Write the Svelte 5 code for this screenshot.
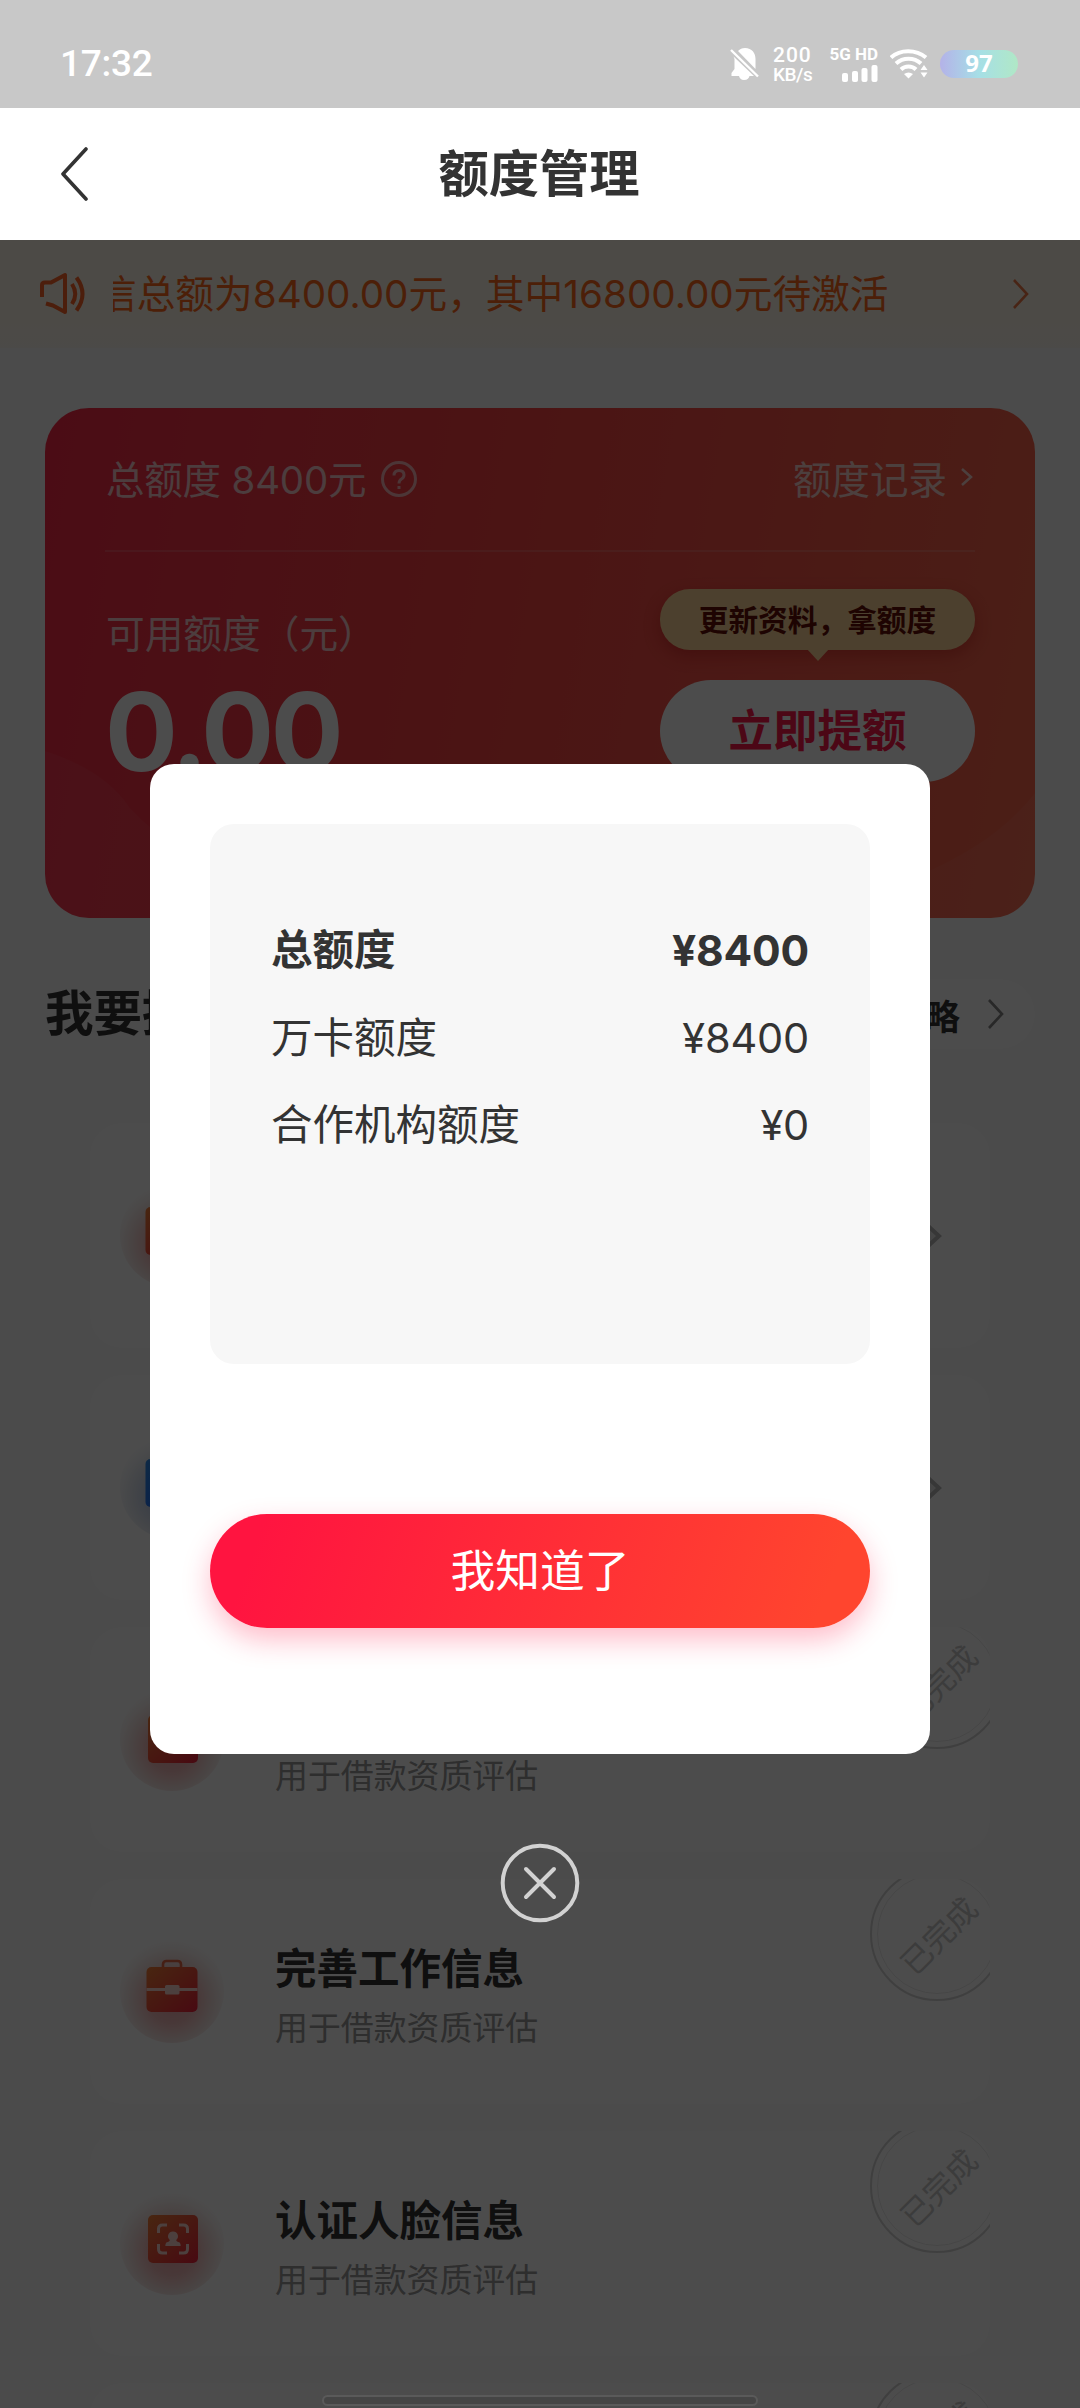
<script>
  const rows = [
    { label: '总额度', value: '¥8400', strong: true },
    { label: '万卡额度', value: '¥8400' },
    { label: '合作机构额度', value: '¥0' }
  ];

  const tasks = [
    { icon: 'card', title: '', note: '', done: false },
    { icon: 'blue', title: '', note: '', done: false },
    { icon: 'user', title: '完善个人信息', note: '用于借款资质评估', done: true },
    { icon: 'work', title: '完善工作信息', note: '用于借款资质评估', done: true },
    { icon: 'face', title: '认证人脸信息', note: '用于借款资质评估', done: true },
    { icon: 'none', title: '', note: '', done: true }
  ];
</script>

<div class="screen">
  <div class="status">
    <span class="clock">17:32</span>
    <div class="indicators">
      <svg class="bell" width="30" height="34" viewBox="0 0 30 34">
        <path d="M8 4 C10 2 12 1 15 1 C22 1 25.500 6 25.500 12 V22 Z M3.500 9.500 L24 29 H19.500 C19 31 17.500 33 14 33 C11 33 9.500 31 9 29 H1.500 V26 L4.500 22 V12 Z" fill="#fff" />
        <path d="M1 3 L28 29.500" stroke="#fff" stroke-width="2.400" />
      </svg>
      <div class="speed"><span>200</span><span>KB/s</span></div>
      <div class="cell">
        <span>5G HD</span>
        <svg width="36" height="17" viewBox="0 0 36 17" fill="#fff">
          <rect x="0" y="8" width="6" height="9" rx="2" />
          <rect x="10" y="6" width="6" height="11" rx="2" />
          <rect x="19.500" y="3" width="6" height="14" rx="2" />
          <rect x="29.500" y="0" width="6" height="17" rx="2" />
        </svg>
      </div>
      <svg class="wifi" width="38" height="30" viewBox="0 0 38 30">
        <g fill="none" stroke="#fff" stroke-width="4">
          <path d="M1 8.500 C10 0 26 0 36 8.500" />
          <path d="M6 14.500 C13 8 24 8 31 14.500" />
          <path d="M11 20.500 C15 16.500 22 16.500 26 20.500" />
        </g>
        <path d="M14 25 Q18.500 22 23 25 L18.500 29.500 Z" fill="#fff" />
        <path d="M30.500 21 l3.500 -5 3.500 5 z M30.500 23.500 l3.500 5 3.500 -5 z" fill="#fff" />
      </svg>
      <div class="battery">97</div>
    </div>
  </div>

  <header class="nav">
    <svg width="28" height="56" viewBox="0 0 28 56" fill="none" stroke="#333" stroke-width="3.600" stroke-linecap="round" stroke-linejoin="round">
      <path d="M26 3 L3 28 L26 53" />
    </svg>
    <h1>额度管理</h1>
  </header>

  <main>
    <div class="notice">
      <svg class="speaker" width="50" height="44" viewBox="0 0 50 44" fill="none" stroke="#ff6428" stroke-width="4" stroke-linejoin="round">
        <path d="M4 25 V13 Q4 10.500 7 10.500 H13 L27 3 V40 L15 33.500 L8 31.500" />
        <path d="M34 12 Q40.500 22 34 32" />
        <path d="M38.500 5.500 Q50.500 22 38.500 38.500" />
      </svg>
      <div class="ticker"><span>信总额为8400.00元，其中16800.00元待激活</span></div>
      <svg class="go" width="20" height="32" viewBox="0 0 20 32" fill="none" stroke="#f07a48" stroke-width="2.600"><path d="M3 2 L16 16 L3 30" /></svg>
    </div>

    <section class="quota">
      <svg class="curve" width="990" height="510" viewBox="0 0 990 510" fill="#fff" fill-opacity=".05">
        <path d="M0 343 Q60 362 85 400 Q150 470 300 510 H0 Z" />
        <path d="M990 385 Q920 475 720 510 H990 Z" />
      </svg>
      <div class="quota-top">
        <span class="total">总额度 8400元</span>
        <svg class="help" width="38" height="38" viewBox="0 0 38 38" fill="none" stroke="#fff" stroke-opacity=".62" stroke-width="3">
          <circle cx="19" cy="19" r="16.500" />
          <path d="M14 15.500 Q14 10.500 19 10.500 Q24 10.500 24 15 Q24 17.500 21.500 19 Q19 20.500 19 23.500 M19 26 V29" />
        </svg>
        <span class="record">额度记录</span>
        <svg class="tiny" width="13" height="20" viewBox="0 0 13 20" fill="none" stroke="#fff" stroke-opacity=".75" stroke-width="2.500"><path d="M2 2 L11 10 L2 18" /></svg>
      </div>
      <div class="quota-body">
        <div>
          <div class="label">可用额度（元）</div>
          <div class="amount">0.00</div>
        </div>
        <div class="actions">
          <div class="bubble">更新资料，拿额度</div>
          <div class="raise">立即提额</div>
        </div>
      </div>
    </section>

    <div class="section-head">
      <h2>我要提额</h2>
      <div class="guide">
        <span>提额攻略</span>
        <svg width="17" height="32" viewBox="0 0 17 32" fill="none" stroke="#858585" stroke-width="2.600"><path d="M2 2 L15 16 L2 30" /></svg>
      </div>
    </div>

    <div class="list">
      {#each tasks as t}
        <article>
          {#if t.icon !== 'none'}
            <div class="glow" class:cool={t.icon === 'blue'} class:low={t.icon === 'user'}>
              <svg width="56" height="58" viewBox="0 0 56 58">
                <defs>
                  <linearGradient id={'g-' + t.icon} x1="0" y1="0" x2="1" y2="1">
                    <stop offset="0" stop-color={t.icon === 'blue' ? '#2f8be8' : '#f08038'} />
                    <stop offset="1" stop-color={t.icon === 'blue' ? '#1f62ff' : '#f0203c'} />
                  </linearGradient>
                </defs>
                {#if t.icon === 'work'}
                  <path d="M19 9 V6.500 Q19 3 22.500 3 H33.500 Q37 3 37 6.500 V9" fill="none" stroke="#e86a48" stroke-width="2.600" />
                  <rect x="2.500" y="9" width="51" height="45" rx="5" fill="url(#g-work)" />
                  <path d="M2.500 31.500 H53.500" stroke="#ffd6d0" stroke-width="3" />
                  <rect x="21" y="27" width="14.500" height="9.500" rx="1.500" fill="#ffd6d0" />
                {:else}
                  <rect x={t.icon === 'face' || t.icon === 'user' ? 4 : 1.5} y="5" width="50" height="48" rx="5" fill={`url(#g-${t.icon})`} />
                  {#if t.icon === 'face'}
                    <g fill="none" stroke="#ffd6d0" stroke-width="3">
                      <path d="M14.500 23 V19 Q14.500 15 18.500 15 H23 M35 15 H39.500 Q43.500 15 43.500 19 V23 M43.500 34 V39 Q43.500 43 39.500 43 H35 M23 43 H18.500 Q14.500 43 14.500 39 V34" />
                    </g>
                    <path d="M29 21.500 a4.800 4.800 0 0 1 3.200 8.500 q0 1.500 3.500 2.500 q1 1 1 3.500 h-15.400 q0 -2.500 1 -3.500 q3.500 -1 3.500 -2.500 a4.800 4.800 0 0 1 3.200 -8.500 z" fill="#ffd6d0" />
                  {/if}
                {/if}
              </svg>
            </div>
          {/if}
          <div class="text">
            <h3>{t.title}</h3>
            <p>{t.note}</p>
          </div>
          {#if t.done}
            <div class="stamp"><span>已完成</span></div>
          {:else}
            <svg class="more" width="18" height="30" viewBox="0 0 18 30" fill="#e6e6e6" stroke="#b8b8b8" stroke-width="4"><path d="M2 3 L15 15 L2 27" /></svg>
          {/if}
        </article>
      {/each}
    </div>

    <div class="mask">
      <div class="dialog">
        <div class="summary">
          {#each rows as r}
            <div class="row" class:strong={r.strong}><span>{r.label}</span><span class="value">{r.value}</span></div>
          {/each}
        </div>
        <button>我知道了</button>
      </div>
      <svg class="close" width="80" height="80" viewBox="0 0 80 80" fill="none" stroke="#d2d2d2" stroke-width="4" stroke-linecap="round">
        <circle cx="40" cy="40" r="37.300" />
        <path d="M26 26 L54 54 M54 26 L26 54" />
      </svg>
    </div>
    <div class="home"></div>
  </main>
</div>

<style>
  :global(body) { background: #4b4b4b; }
  .screen {
    width: 1080px;
    height: 2408px;
    overflow: hidden;
    display: flex;
    flex-direction: column;
    font-family: Inter, "Noto Sans CJK SC", sans-serif;
    color: #333;
  }
  .screen * { box-sizing: border-box; }
  svg { display: block; flex: none; }
  h1, h2, h3, p { margin: 0; }

  .status {
    height: 108px;
    flex: none;
    background: #c8c8c8;
    color: #fff;
    display: flex;
    justify-content: space-between;
    padding: 20px 62px 0 60px;
  }
  .clock { font: 500 37px/88px Roboto, sans-serif; letter-spacing: -.3px; }
  .indicators { display: flex; align-items: center; height: 88px; }
  .bell { margin-right: 13px; }
  .speed {
    display: flex;
    flex-direction: column;
    width: 43px;
    margin-right: 13px;
    font: 500 21px/20px Roboto, sans-serif;
  }
  .speed span:last-child { font-size: 19px; line-height: 19px; letter-spacing: -.5px; }
  .speed span:first-child { letter-spacing: 1px; }
  .cell {
    width: 49px;
    margin-right: 12px;
    display: flex;
    flex-direction: column;
    align-items: flex-end;
    gap: 4px;
    font: 700 17px/14px Roboto, sans-serif;
    white-space: nowrap;
  }
  .wifi { margin-right: 12px; }
  .battery {
    width: 78px;
    height: 28px;
    border-radius: 14px;
    background: linear-gradient(90deg, #b4b2e8, #a6dfe6 50%, #b0e8c6);
    font: 700 24px/26px "Noto Sans", sans-serif;
    text-align: center;
  }

  .nav {
    height: 132px;
    flex: none;
    background: #fff;
    display: flex;
    align-items: center;
    padding: 0 62px 0 60px;
  }
  .nav h1 { flex: 1; margin-right: 28px; text-align: center; font-size: 50.300px; line-height: 70px; font-weight: 700; }

  main {
    position: relative;
    flex: 1;
    min-height: 0;
    background: #fafafa;
    overflow: hidden;
  }
  .notice {
    height: 108px;
    margin-bottom: 60px;
    background: linear-gradient(#fff8e9 60%, #fcf9f0);
    display: flex;
    align-items: center;
    padding: 0 49px 1px 38px;
    color: #ff6a1c;
  }
  .ticker {
    flex: 1;
    margin-left: 25px;
    overflow: hidden;
    white-space: nowrap;
    font-size: 38.700px;
    line-height: 60px;
  }
  .ticker span { display: block; margin-left: -15px; }

  .quota {
    position: relative;
    width: 990px;
    height: 510px;
    margin: 0 45px;
    border-radius: 44px;
    overflow: hidden;
    background: linear-gradient(100deg, #fa2a48, #fa4444 45%, #fa684c);
    padding: 0 60px;
    color: #fff;
  }
  .curve { position: absolute; left: 0; top: 0; }
  .quota-top {
    position: relative;
    height: 144px;
    display: flex;
    align-items: center;
    border-bottom: 2px solid rgba(255, 255, 255, .15);
    padding: 0 2px 4px 1px;
    font-size: 38.500px;
    color: rgba(255, 255, 255, .75);
  }
  .total { margin-right: 14px; letter-spacing: -.2px; }
  .help { margin-top: 4px; }
  .record { margin-left: auto; margin-right: 13px; }
  .quota-body { position: relative; display: flex; justify-content: space-between; }
  .label { margin: 52px 0 0 1px; font-size: 38.700px; line-height: 60px; color: rgba(255, 255, 255, .75); }
  .amount { margin: 2px 0 0 0; font-size: 108px; line-height: 132px; font-weight: 700; letter-spacing: -3.200px; }
  .actions { width: 315px; margin-top: 37px; }
  .bubble {
    position: relative;
    height: 61px;
    border-radius: 30px;
    background: #ffd899;
    color: #661008;
    font-size: 29.700px;
    line-height: 62px;
    font-weight: 600;
    text-align: center;
    white-space: nowrap;
    box-shadow: 0 6px 16px rgba(170, 10, 10, .35);
  }
  .bubble::after {
    content: "";
    position: absolute;
    left: 147px;
    top: 60px;
    border: 11px solid transparent;
    border-top: 12px solid #ffd899;
    border-bottom: 0;
  }
  .raise {
    height: 102px;
    margin-top: 30px;
    border-radius: 51px;
    background: #fff;
    color: #ff1a4a;
    font-size: 44.500px;
    line-height: 103px;
    font-weight: 600;
    text-align: center;
  }

  .section-head {
    display: flex;
    align-items: center;
    justify-content: space-between;
    height: 70px;
    margin: 61px 45px 74px;
  }
  .section-head h2 { font-size: 48.500px; font-weight: 700; color: #333; line-height: 70px; }
  .guide {
    height: 70px;
    border-radius: 35px;
    background: #fefefe;
    display: flex;
    align-items: center;
    gap: 27px;
    padding: 0 31px;
    font-size: 35px;
    font-weight: 700;
    color: #333;
  }

  .list { display: flex; flex-direction: column; gap: 27px; margin: 0 90px; }
  article {
    position: relative;
    height: 225px;
    flex: none;
    border-radius: 32px;
    background: #fefefe;
    overflow: hidden;
    display: flex;
    align-items: center;
    padding: 0 48px 0 30px;
  }
  .glow {
    width: 104px;
    height: 104px;
    margin-bottom: 2px;
    border-radius: 50%;
    display: grid;
    place-items: center;
    padding-bottom: 8px;
    background: radial-gradient(circle at 50% 58%, #eea4aa 0, #f2bcbc 30%, #f5e0de 50%, #fbf5f4 64%, #fefefe 74%);
  }
  .glow.cool { background: radial-gradient(circle at 50% 58%, #a8c0ec 0, #c8d4ec 30%, #e4e9f2 50%, #f6f8fb 64%, #fefefe 74%); }
  .glow.low { padding-bottom: 0; }
  .text { margin-left: 51px; padding-top: 15px; flex: 1; }
  h3 { font-size: 41.500px; line-height: 60px; height: 60px; font-weight: 700; color: #333; }
  p { font-size: 32.900px; line-height: 59px; height: 60px; color: #999; }
  .stamp {
    position: absolute;
    left: 780px;
    top: -12px;
    width: 134px;
    height: 134px;
    border-radius: 50%;
    border: 2.500px solid #d4d4d4;
    display: grid;
    place-items: center;
    color: #c8c8c8;
    font-size: 31px;
  }
  .stamp::after {
    content: "";
    position: absolute;
    inset: 5px;
    border-radius: 50%;
    border: 1.500px solid #ebebeb;
  }
  .stamp span { transform: rotate(-45deg); white-space: nowrap; }

  .mask {
    position: absolute;
    inset: 0;
    background: rgba(0, 0, 0, .7);
    display: flex;
    flex-direction: column;
    align-items: center;
    padding-top: 524px;
  }
  .dialog {
    width: 780px;
    height: 990px;
    flex: none;
    border-radius: 24px;
    background: #fff;
    padding: 60px;
  }
  .summary {
    height: 540px;
    border-radius: 24px;
    background: #f7f7f7;
    padding: 83px 61px 0 61px;
  }
  .row {
    display: flex;
    justify-content: space-between;
    font-size: 41.500px;
    line-height: 87.500px;
  }
  .value { letter-spacing: -.2px; }
  .strong { font-weight: 700; }
  .strong .value { font-size: 42.500px; }
  button {
    display: block;
    width: 660px;
    height: 114px;
    margin-top: 150px;
    border: 0;
    border-radius: 57px;
    background: linear-gradient(110deg, #ff1440 8%, #ff452e 92%);
    box-shadow: 0 12px 28px rgba(255, 20, 70, .28);
    color: #fff;
    font: 400 44.800px/112px Inter, "Noto Sans CJK SC", sans-serif;
    padding: 0;
  }
  .close { margin-top: 89px; }
  .home {
    position: absolute;
    left: 322px;
    bottom: 2px;
    width: 436px;
    height: 11px;
    border-radius: 6px;
    border: 2px solid #5a5a5a;
    background: #454545;
  }
</style>
